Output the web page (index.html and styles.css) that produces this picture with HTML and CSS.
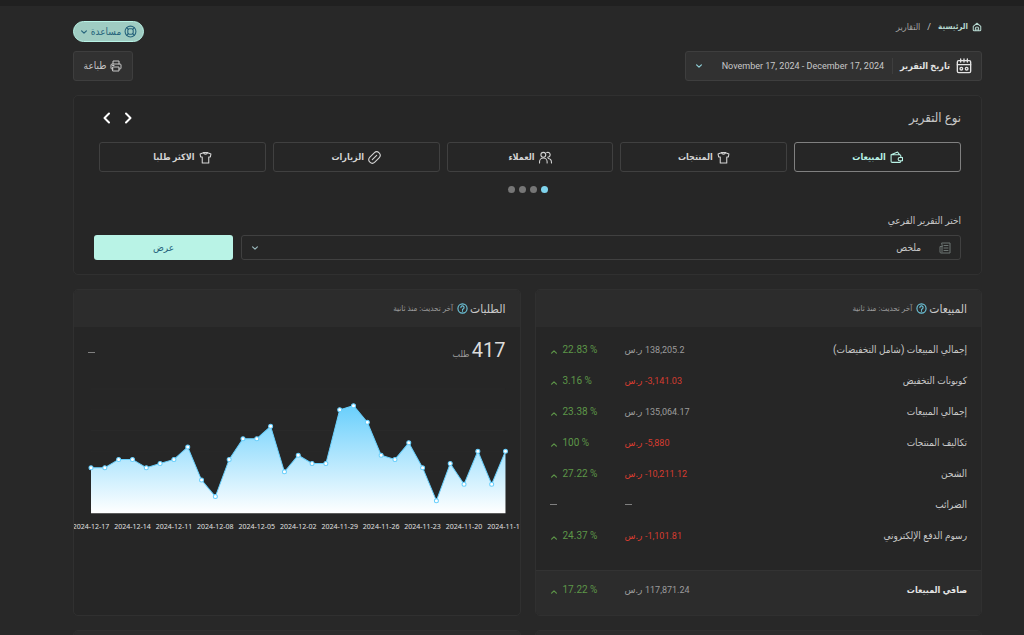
FILE: index.html
```html
<!DOCTYPE html>
<html lang="ar" dir="rtl">
<head>
    <meta charset="UTF-8">
    <meta name="viewport" content="width=device-width, initial-scale=1.0">
    <title>التقارير</title>
    <link rel="stylesheet" href="styles.css">
</head>
<body>

<!-- shared icons -->
<svg class="sprite" aria-hidden="true">
    <symbol id="down" viewBox="0 0 10 10"><path d="M2 3.5 5 6.5 8 3.5"/></symbol>
    <symbol id="up" viewBox="0 0 10 10"><path d="M2 6.5 5 3.5 8 6.5"/></symbol>
    <symbol id="shirt" viewBox="0 0 24 24"><path d="M8 3 2 5.500 3 11h3v11h12V11h3l1-5.500L16 3c-.8 2-2.200 3-4 3S8.800 5 8 3zM8 3h8"/></symbol>
    <symbol id="help" viewBox="0 0 24 24"><circle cx="12" cy="12" r="10"/><path d="M8.500 10a3.500 3.500 0 1 1 5 3c-1 .500-1.500 1-1.500 2M12 17.500v.5"/></symbol>
</svg>

<div class="top-bar"></div>

<main class="page">
    <header class="row header">
        <nav class="breadcrumb">
            <a href="#">
                <svg class="icon home" viewBox="0 0 24 24"><path d="M3 10.500 12 3l9 7.500V19a2 2 0 0 1-2 2H5a2 2 0 0 1-2-2zM8 21v-5a4 4 0 0 1 8 0v5M12 21v-4"/></svg>
                الرئيسية
            </a>
            <span class="slash">/</span>
            <span>التقارير</span>
        </nav>
        <button class="help-button">
            <svg class="icon ring" viewBox="0 0 24 24"><circle cx="12" cy="12" r="10"/><rect x="7" y="7" width="10" height="10" rx="3"/><path d="M5 5l3 3M19 5l-3 3M5 19l3-3M19 19l-3-3"/></svg>
            مساعدة
            <svg class="icon caret"><use href="#down"/></svg>
        </button>
    </header>

    <div class="row tools">
        <button class="date-button">
            <svg class="icon calendar" viewBox="0 0 24 24"><rect x="2" y="4" width="20" height="18" rx="2"/><path d="M2 10h20M7 1.500V6M12 1.500V6M17 1.500V6"/><circle cx="8" cy="16" r="2"/><circle cx="16" cy="16" r="2"/></svg>
            <b>تاريخ التقرير</b>
            <span class="date-range" dir="ltr">November 17, 2024 - December 17, 2024</span>
            <svg class="icon caret"><use href="#down"/></svg>
        </button>
        <button class="print-button">
            <svg class="icon printer" viewBox="0 0 24 24"><path d="M6 8V2h12v6M6 18H4a2 2 0 0 1-2-2v-6a2 2 0 0 1 2-2h16a2 2 0 0 1 2 2v6a2 2 0 0 1-2 2h-2M6 14h12v8H6zM5 11h3"/></svg>
            طباعة
        </button>
    </div>

    <section class="card report-card">
        <div class="row report-head">
            <h2>نوع التقرير</h2>
            <div class="arrows">
                <button aria-label="السابق"><svg class="icon" viewBox="0 0 12 12"><path d="M4 1.500 8.500 6 4 10.500"/></svg></button>
                <button aria-label="التالي"><svg class="icon" viewBox="0 0 12 12"><path d="M8 1.500 3.500 6 8 10.500"/></svg></button>
            </div>
        </div>

        <div class="tabs">
            <button class="tab active">
                <svg class="icon" viewBox="0 0 24 24"><path d="M20 12V9a2 2 0 0 0-2-2H2v12a2 2 0 0 0 2 2h14a2 2 0 0 0 2-2v-1M2 7l12-5 4 5M23 12h-5a3 3 0 0 0 0 6h5z"/></svg>
                المبيعات
            </button>
            <button class="tab"><svg class="icon"><use href="#shirt"/></svg>المنتجات</button>
            <button class="tab">
                <svg class="icon" viewBox="0 0 24 24"><circle cx="8" cy="7" r="4.500"/><path d="M1 22v-2a7 7 0 0 1 14 0v2M14 3a4.500 4.500 0 1 1 2 8.500M17 14a7 7 0 0 1 6 7v1"/></svg>
                العملاء
            </button>
            <button class="tab">
                <svg class="icon" viewBox="0 0 24 24"><path d="M3.500 11.500l8-8a6.300 6.300 0 0 1 9 9l-8 8a6.300 6.300 0 0 1-9-9zM8 16l8-8"/></svg>
                الزيارات
            </button>
            <button class="tab"><svg class="icon"><use href="#shirt"/></svg>الاكثر طلبا</button>
        </div>

        <div class="dots"><i class="on"></i><i></i><i></i><i></i></div>

        <form class="sub-report">
            <label for="subReport">اختر التقرير الفرعي</label>
            <div class="sub-row">
                <div class="select-box">
                    <svg class="icon paper" viewBox="0 0 24 24"><path d="M6 2h16v20H4a2 2 0 0 1-2-2V9h4zM6 9v11M10 7h8M10 12h8M10 17h8"/></svg>
                    <select id="subReport"><option>ملخص</option></select>
                    <svg class="icon caret"><use href="#down"/></svg>
                </div>
                <button type="button" class="show-button">عرض</button>
            </div>
        </form>
    </section>

    <div class="cards">
        <section class="card">
            <div class="card-head">
                <h3>المبيعات</h3>
                <svg class="icon"><use href="#help"/></svg>
                <small>آخر تحديث: منذ ثانية</small>
            </div>
            <table class="sales">
                <tbody>
                    <tr><th scope="row">إجمالي المبيعات (شامل التخفيضات)</th><td><bdi dir="ltr">138,205.2</bdi> ر.س</td><td class="change"><svg class="icon"><use href="#up"/></svg>22.83 %</td></tr>
                    <tr><th scope="row">كوبونات التخفيض</th><td class="minus"><bdi dir="ltr">-3,141.03</bdi> ر.س</td><td class="change"><svg class="icon"><use href="#up"/></svg>3.16 %</td></tr>
                    <tr><th scope="row">إجمالي المبيعات</th><td><bdi dir="ltr">135,064.17</bdi> ر.س</td><td class="change"><svg class="icon"><use href="#up"/></svg>23.38 %</td></tr>
                    <tr><th scope="row">تكاليف المنتجات</th><td class="minus"><bdi dir="ltr">-5,880</bdi> ر.س</td><td class="change"><svg class="icon"><use href="#up"/></svg>100 %</td></tr>
                    <tr><th scope="row">الشحن</th><td class="minus"><bdi dir="ltr">-10,211.12</bdi> ر.س</td><td class="change"><svg class="icon"><use href="#up"/></svg>27.22 %</td></tr>
                    <tr><th scope="row">الضرائب</th><td><span class="dash"></span></td><td><span class="dash"></span></td></tr>
                    <tr><th scope="row">رسوم الدفع الإلكتروني</th><td class="minus"><bdi dir="ltr">-1,101.81</bdi> ر.س</td><td class="change"><svg class="icon"><use href="#up"/></svg>24.37 %</td></tr>
                </tbody>
                <tfoot>
                    <tr><th scope="row">صافي المبيعات</th><td><bdi dir="ltr">117,871.24</bdi> ر.س</td><td class="change"><svg class="icon"><use href="#up"/></svg>17.22 %</td></tr>
                </tfoot>
            </table>
        </section>

        <section class="card">
            <div class="card-head">
                <h3>الطلبات</h3>
                <svg class="icon"><use href="#help"/></svg>
                <small>آخر تحديث: منذ ثانية</small>
            </div>
            <div class="row total">
                <div><strong>417</strong> <span>طلب</span></div>
                <span class="dash"></span>
            </div>
            <svg id="chart" class="chart" viewBox="0 0 445 156" direction="ltr"></svg>
        </section>

        <section class="card"><div class="card-head"></div></section>
        <section class="card"><div class="card-head"></div></section>
    </div>
</main>

<script>
    const orders = [11, 11, 13, 13, 11, 12, 13, 16, 8, 4, 13, 18, 18, 21, 10, 14,
                    12, 12, 25, 26, 22, 14, 13, 17, 11, 3, 12, 7, 15, 7, 15];
    const dates  = ["2024-12-17", "2024-12-14", "2024-12-11", "2024-12-08", "2024-12-05", "2024-12-02",
                    "2024-11-29", "2024-11-26", "2024-11-23", "2024-11-20", "2024-11-17"];
    const left = 17, base = 136, stepX = 13.8, stepY = 4.13;

    const x = i => left + i * stepX;
    const y = v => base - v * stepY;
    const right = x(orders.length - 1);
    const line = orders.map((v, i) => `${x(i)},${y(v)}`).join(" ");

    let svg = `<linearGradient id="fill" x1="0" y1="0" x2="0" y2="1">
        <stop offset="0" stop-color="#69cffc"/><stop offset="1" stop-color="#ffffff"/></linearGradient>`;

    // grid
    for (let v = 5; v <= 30; v += 5) {
        svg += `<line class="grid" x1="${left}" x2="${right}" y1="${y(v)}" y2="${y(v)}"/>`;
    }

    svg += `<polygon fill="url(#fill)" points="${left},${base} ${line} ${right},${base}"/>`;
    svg += `<polyline class="line" points="${line}"/>`;
    orders.forEach((v, i) => {
        svg += `<circle class="point" cx="${x(i)}" cy="${y(v)}" r="2"/>`;
    });
    dates.forEach((d, i) => {
        svg += `<text x="${x(i * 3)}" y="${base + 16}">${d}</text>`;
    });

    document.getElementById("chart").innerHTML = svg;
</script>

</body>
</html>
```

FILE: styles.css
```css
* {
    box-sizing: border-box;
}

body {
    margin: 0;
    height: 100vh;
    overflow: hidden;
    background-color: #282828;
    color: #c8c8c8;
    font-family: Roboto, "DejaVu Sans Condensed", "DejaVu Sans", sans-serif;
    font-size: 10px;
    line-height: 16px;
}

button, select {
    font: inherit;
    color: inherit;
    background: none;
    border: 0;
    padding: 0;
    cursor: pointer;
}

h2, h3 {
    margin: 0;
    font-weight: normal;
}

.sprite {
    display: none;
}

.icon {
    width: 12px;
    height: 12px;
    flex: none;
    fill: none;
    stroke: currentColor;
    stroke-width: 2;
    stroke-linecap: round;
    stroke-linejoin: round;
}

.caret {
    width: 8px;
    height: 8px;
    stroke-width: 1.5;
}

.top-bar {
    height: 6px;
    background-color: #202020;
}

.page {
    padding: 15px 42px 0 73px;
}

.row {
    display: flex;
    justify-content: space-between;
    align-items: center;
}

/* header */
.header {
    align-items: flex-start;
}

.breadcrumb {
    display: flex;
    align-items: center;
    height: 12px;
    font-size: 9px;
    color: #a0a0a0;
}

.breadcrumb a {
    display: flex;
    align-items: center;
    gap: 4px;
    color: #b6d8d0;
    font-size: 8px;
    font-weight: bold;
    text-decoration: none;
}

.home {
    width: 10px;
    height: 10px;
    stroke-width: 2.5;
}

.slash {
    margin: 0 7px;
    color: #c8c8c8;
}

.help-button {
    display: flex;
    align-items: center;
    justify-content: center;
    gap: 3px;
    width: 71px;
    height: 21px;
    border: 1px solid #b9f3e6;
    border-radius: 11px;
    background-color: #9fccc2;
    color: #27647c;
}

.ring {
    width: 13px;
    height: 13px;
}

.tools {
    margin-top: 9px;
}

.date-button, .print-button {
    display: flex;
    align-items: center;
    height: 30px;
    border: 1px solid #3e3e3e;
    border-radius: 3px;
    background-color: #313131;
}

.date-button {
    width: 297px;
    padding: 0 9px;
}

.date-button b {
    margin-right: 6px;
    padding-left: 7px;
    border-left: 1px solid #3e3e3e;
    font-size: 9px;
    color: #e4e4e4;
}

.date-range {
    flex: 1;
    margin-right: 8px;
    font-size: 9px;
    text-align: right;
    white-space: nowrap;
}

.date-button .caret {
    color: #8fd0d8;
}

.calendar {
    width: 16px;
    height: 16px;
    color: #e4e4e4;
}

.print-button {
    justify-content: center;
    gap: 4px;
    width: 60px;
}

/* report type */
.card {
    overflow: hidden;
    border: 1px solid #303030;
    border-radius: 5px;
    background-color: #262626;
}

.report-card {
    margin-top: 14px;
    padding: 14px 20px;
}

.report-head h2 {
    font-size: 13px;
}

.arrows {
    display: flex;
    gap: 9px;
    margin-left: 7px;
    color: #ffffff;
}

.arrows button {
    height: 16px;
}

.arrows .icon {
    display: block;
}

.tabs {
    display: flex;
    gap: 7px;
    margin: 16px 0 0 5px;
}

.tab {
    display: flex;
    flex: 1;
    align-items: center;
    justify-content: center;
    gap: 4px;
    height: 30px;
    border: 1px solid #404040;
    border-radius: 3px;
    font-size: 9px;
    font-weight: bold;
    color: #d4d4d4;
}

.tab .icon {
    width: 13px;
    height: 13px;
}

.tab.active {
    border-color: #808080;
    color: #b9f3e6;
}

.dots {
    display: flex;
    justify-content: center;
    gap: 4px;
    margin-top: 14px;
}

.dots i {
    width: 7px;
    height: 7px;
    border-radius: 50%;
    background-color: #767676;
}

.dots .on {
    background-color: #7fd3ec;
}

.sub-report label {
    display: block;
    margin-top: 20px;
}

.sub-row {
    display: flex;
    gap: 8px;
    margin-top: 6px;
}

.select-box {
    display: flex;
    flex: 1;
    align-items: center;
    height: 25px;
    padding: 0 9px;
    border: 1px solid #404040;
    border-radius: 3px;
}

.select-box select {
    flex: 1;
    height: 23px;
    padding: 0 18px;
    appearance: none;
    outline: none;
}

.select-box .caret {
    color: #9ab8bc;
}

.paper {
    color: #6c7472;
}

.show-button {
    width: 139px;
    height: 25px;
    border-radius: 3px;
    background-color: #b9f3e6;
    color: #27647c;
}

/* cards */
.cards {
    display: grid;
    grid-template-columns: 1fr 1fr;
    gap: 14px;
    margin-top: 14px;
}

.card-head {
    display: flex;
    align-items: center;
    gap: 2px;
    height: 37px;
    padding: 0 14px;
    background-color: #2c2c2c;
}

.card-head h3 {
    font-size: 12px;
}

.card-head .icon {
    width: 11px;
    height: 11px;
    color: #6cc4da;
    stroke-width: 2.5;
}

.card-head small {
    margin-right: 2px;
    font-size: 8px;
    color: #9c9c9c;
}

.sales {
    width: 100%;
    border-collapse: collapse;
}

.sales th, .sales td {
    height: 31px;
    padding: 0;
    vertical-align: middle;
}

.sales th {
    padding-right: 14px;
    text-align: right;
    font-weight: normal;
}

.sales td {
    width: 89px;
    text-align: left;
    color: #9c9c9c;
}

.sales td:last-child {
    padding-left: 14px;
}

.sales bdi {
    font-size: 9px;
}

.sales tbody::before, .sales tbody::after {
    content: "";
    display: table-row;
    height: 7px;
}

.sales tbody::after {
    height: 19px;
}

.sales .minus {
    color: #d63c30;
}

.sales .change {
    direction: ltr;
    color: #5d9648;
}

.change .icon {
    width: 8px;
    height: 8px;
    margin-right: 5px;
    stroke-width: 1.5;
    vertical-align: -3px;
}

.sales tfoot tr {
    border-top: 1px solid #333333;
    background-color: #2c2c2c;
}

.sales tfoot th, .sales tfoot td {
    height: 45px;
    padding-bottom: 6px;
}

.sales tfoot th {
    font-size: 9px;
    font-weight: bold;
    color: #e4e4e4;
}

.dash {
    display: inline-block;
    width: 7px;
    height: 1px;
    background-color: #808080;
    vertical-align: middle;
}

.total {
    height: 50px;
    padding: 0 14px;
    font-size: 9px;
    color: #9c9c9c;
}

.total strong {
    font-size: 20px;
    font-weight: normal;
    color: #dcdcdc;
}

.chart {
    display: block;
    width: 100%;
    direction: ltr;
}

.grid {
    stroke: #292929;
}

.line {
    fill: none;
    stroke: #69cffc;
}

.point {
    fill: #ffffff;
    stroke: #69cffc;
}

.chart text {
    font-family: "Noto Sans", sans-serif;
    font-size: 7px;
    text-anchor: middle;
    fill: #e0e0e0;
}
```
